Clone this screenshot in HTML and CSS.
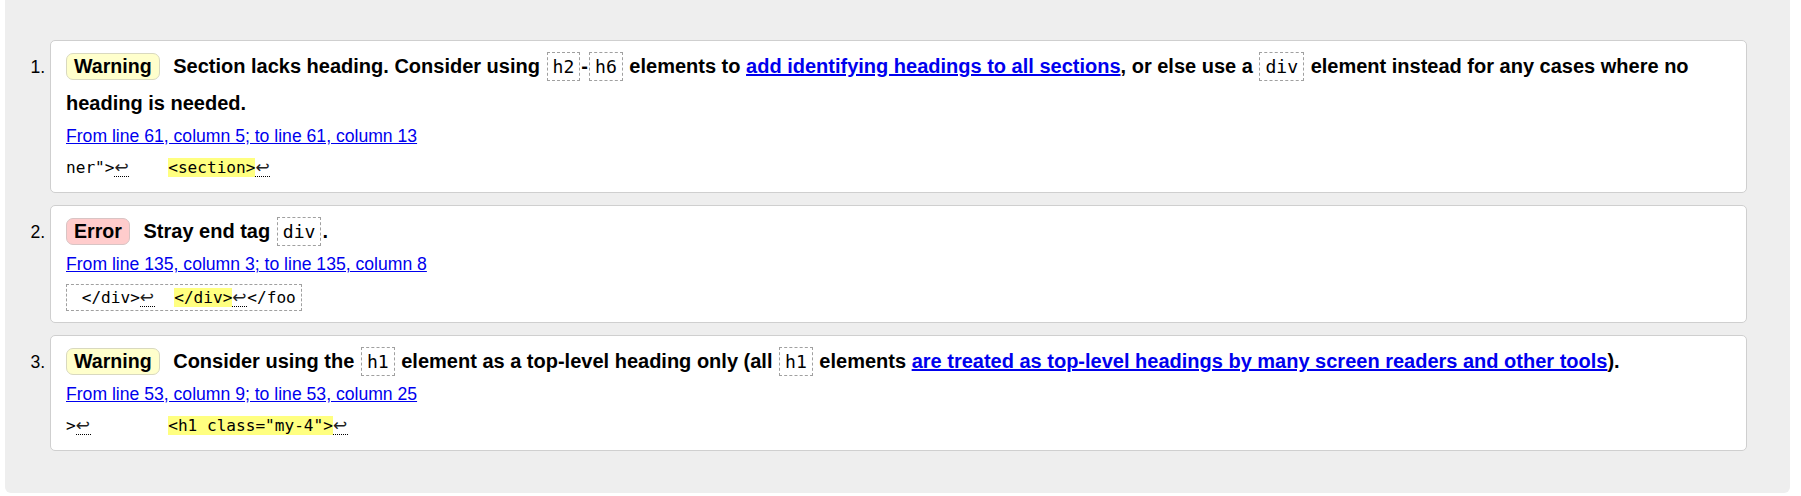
FILE: index.html
```html
<!DOCTYPE html>
<html lang="en">
<head>
<meta charset="utf-8">
<title>Validation results</title>
<link rel="stylesheet" href="styles.css">
</head>
<body>
<div class="panel">
  <ol class="messages">
    <li class="card">
      <p class="msg"><strong class="badge warn">Warning</strong> Section lacks heading. Consider using <code>h2</code>-<code>h6</code> elements to <a href="#">add identifying headings to all sections</a>, or else use a <code>div</code> element instead for any cases where no <span>heading is needed.</span></p>
      <p class="loc"><a href="#">From line 61, column 5; to line 61, column 13</a></p>
      <p class="extract"><code>ner"&gt;<span class="lf" title="Line break">↩</span>    <mark>&lt;section&gt;</mark><span class="lf" title="Line break">↩</span></code></p>
    </li>
    <li class="card">
      <p class="msg"><strong class="badge err">Error</strong> Stray end tag <code>div</code>.</p>
      <p class="loc"><a href="#">From line 135, column 3; to line 135, column 8</a></p>
      <p class="extract boxed"><code> &lt;/div&gt;<span class="lf" title="Line break">↩</span>  <mark>&lt;/div&gt;</mark><span class="lf" title="Line break">↩</span>&lt;/foo</code></p>
    </li>
    <li class="card">
      <p class="msg"><strong class="badge warn">Warning</strong> Consider using the <code>h1</code> element as a top-level heading only (all <code>h1</code> elements <a href="#">are treated as top-level headings by many screen readers and other tools</a>).</p>
      <p class="loc"><a href="#">From line 53, column 9; to line 53, column 25</a></p>
      <p class="extract"><code>&gt;<span class="lf" title="Line break">↩</span>        <mark>&lt;h1 class="my-4"&gt;</mark><span class="lf" title="Line break">↩</span></code></p>
    </li>
  </ol>
</div>
</body>
</html>
```

FILE: styles.css
```css
html, body {
  margin: 0;
  padding: 0;
  background: #fff;
}

body {
  font-family: "Liberation Sans", Arial, sans-serif;
  font-size: 17.6px;
  color: #000;
}

.panel {
  margin: 0 11px 0 5px;
  padding: 40px 43px 42px 45px;
  background: #eeeeee;
  border-radius: 0 0 6px 6px;
}

.messages {
  margin: 0;
  padding: 0;
  list-style: decimal outside;
}

.card {
  background: #fff;
  border: 1px solid #cfcfcf;
  border-radius: 5px;
  padding: 7px 15px 9px;
  margin: 0 0 12px;
  font-size: 17.6px;
}

.card:last-child {
  margin-bottom: 0;
}

.msg {
  margin: 0;
  font-size: 20px;
  font-weight: bold;
  line-height: 37px;
}

.badge {
  display: inline-block;
  line-height: normal;
  font-size: 19.6px;
  padding: 1px 7px;
  border: 1px solid #cccccc;
  border-radius: 7px;
  margin-right: 8px;
}

.badge.warn {
  background: #ffffcc;
  border-color: #d9d9bf;
}

.badge.err {
  background: #ffcccc;
  border-color: #d9c4c4;
}

.msg code {
  display: inline-block;
  line-height: normal;
  font-family: "DejaVu Sans Mono", "Liberation Mono", monospace;
  font-size: 18.1px;
  font-weight: normal;
  padding: 3px 5px;
  margin: 0 1px;
  border: 1px dashed #a0a0a0;
}

a {
  color: #0000ee;
  text-decoration: underline;
}

.loc {
  margin: 1px 0 0;
  line-height: 26.4px;
}

.extract {
  margin: 4px 0 0;
  font-family: "DejaVu Sans Mono", "Liberation Mono", monospace;
  font-size: 16.1px;
  line-height: 30px;
}

.extract.boxed {
  margin-top: 5px;
}

.extract code {
  font-family: inherit;
  font-size: inherit;
  white-space: pre;
}

.extract.boxed code {
  display: inline-block;
  line-height: normal;
  padding: 3px 5px;
  border: 1px dashed #a0a0a0;
}

.extract mark {
  background: #ffff80;
  color: #000;
}

.lf {
  display: inline-block;
  width: 15px;
  font-family: "DejaVu Sans", sans-serif;
  font-size: 17px;
  line-height: 17px;
  color: #222;
  border-bottom: 1px dotted #000;
  text-align: left;
}
```
